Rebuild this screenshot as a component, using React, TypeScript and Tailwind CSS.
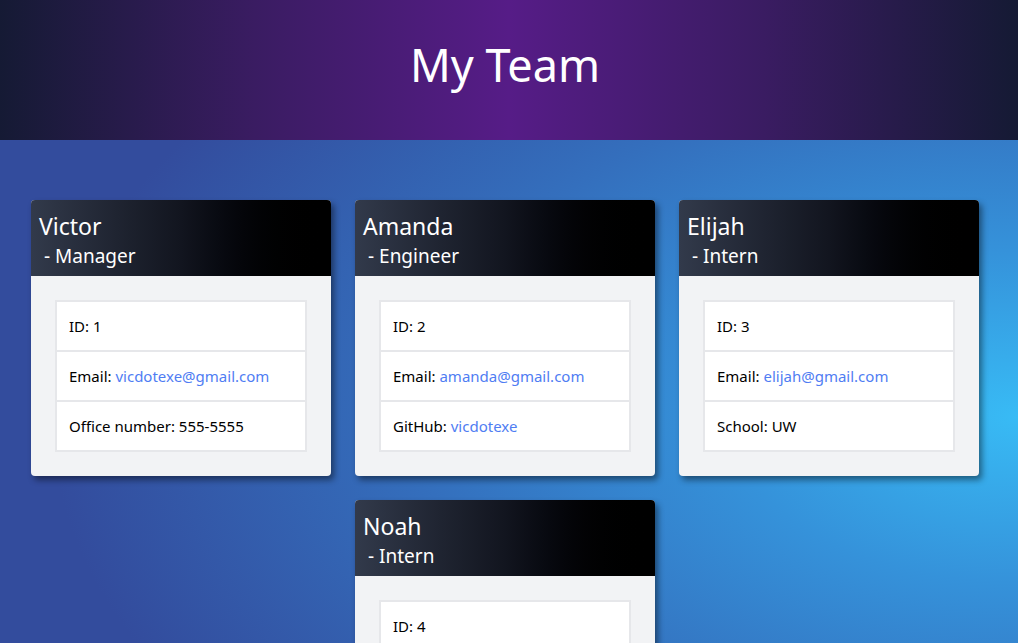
import React from 'react';

type Member = {
  name: string;
  role: string;
  id: number;
  email: string;
  extraLabel: string;
  extraValue: string;
  extraLink?: boolean;
};

const team: Member[] = [
  { name: 'Victor', role: 'Manager', id: 1, email: 'vicdotexe@gmail.com', extraLabel: 'Office number', extraValue: '555-5555' },
  { name: 'Amanda', role: 'Engineer', id: 2, email: 'amanda@gmail.com', extraLabel: 'GitHub', extraValue: 'vicdotexe', extraLink: true },
  { name: 'Elijah', role: 'Intern', id: 3, email: 'elijah@gmail.com', extraLabel: 'School', extraValue: 'UW' },
  { name: 'Noah', role: 'Intern', id: 4, email: 'noah@gmail.com', extraLabel: 'School', extraValue: 'UW' },
];

const Row: React.FC<{ children: React.ReactNode; last?: boolean }> = ({ children, last }) => (
  <li
    className={`flex items-center px-[12px] bg-white border-x-2 border-t-2 border-[#e6e7ea] ${
      last ? 'h-[52px] border-b-2' : 'h-[50px]'
    }`}
  >
    {children}
  </li>
);

const Card: React.FC<{ m: Member }> = ({ m }) => (
  <div className="w-[300px] rounded-[4px] overflow-hidden bg-[#f2f3f5] shadow-[3px_4px_6px_rgba(0,0,0,0.45)]">
    <div className="h-[76px] px-[8px] pt-[10px] bg-gradient-to-r from-[#323a4b] via-[#12151f] to-black text-white">
      <div className="text-[23px] leading-[32px]">{m.name}</div>
      <div className="text-[19px] leading-[28px] pl-[5px]">- {m.role}</div>
    </div>
    <div className="p-[24px]">
      <ul className="text-[15px] text-black">
        <Row>ID: {m.id}</Row>
        <Row>
          Email:&nbsp;<span className="text-[#4f7df3]">{m.email}</span>
        </Row>
        <Row last>
          {m.extraLabel}:&nbsp;
          {m.extraLink ? <span className="text-[#4f7df3]">{m.extraValue}</span> : m.extraValue}
        </Row>
      </ul>
    </div>
  </div>
);

export default function App() {
  return (
    <div className="min-h-screen" style={{ fontFamily: '"Noto Sans", "Open Sans", sans-serif' }}>
      <header className="h-[140px] flex items-center justify-center pr-[8px] bg-[linear-gradient(90deg,#151a34_0%,#3a1c62_25%,#561c87_50%,#3a1c62_75%,#151a34_100%)]">
        <h1 className="text-[45px] text-white font-normal leading-none -mt-[12px]">My Team</h1>
      </header>
      <main className="h-[503px] overflow-hidden pt-[60px] pr-[8px] bg-[radial-gradient(ellipse_95%_110%_at_100%_55%,#38bbf5_0%,#3592da_30%,#346fbd_62%,#334c9d_100%)]">
        <div className="flex flex-wrap justify-center gap-[24px] max-w-[960px] mx-auto">
          {team.map((m) => (
            <Card key={m.id} m={m} />
          ))}
        </div>
      </main>
    </div>
  );
}
